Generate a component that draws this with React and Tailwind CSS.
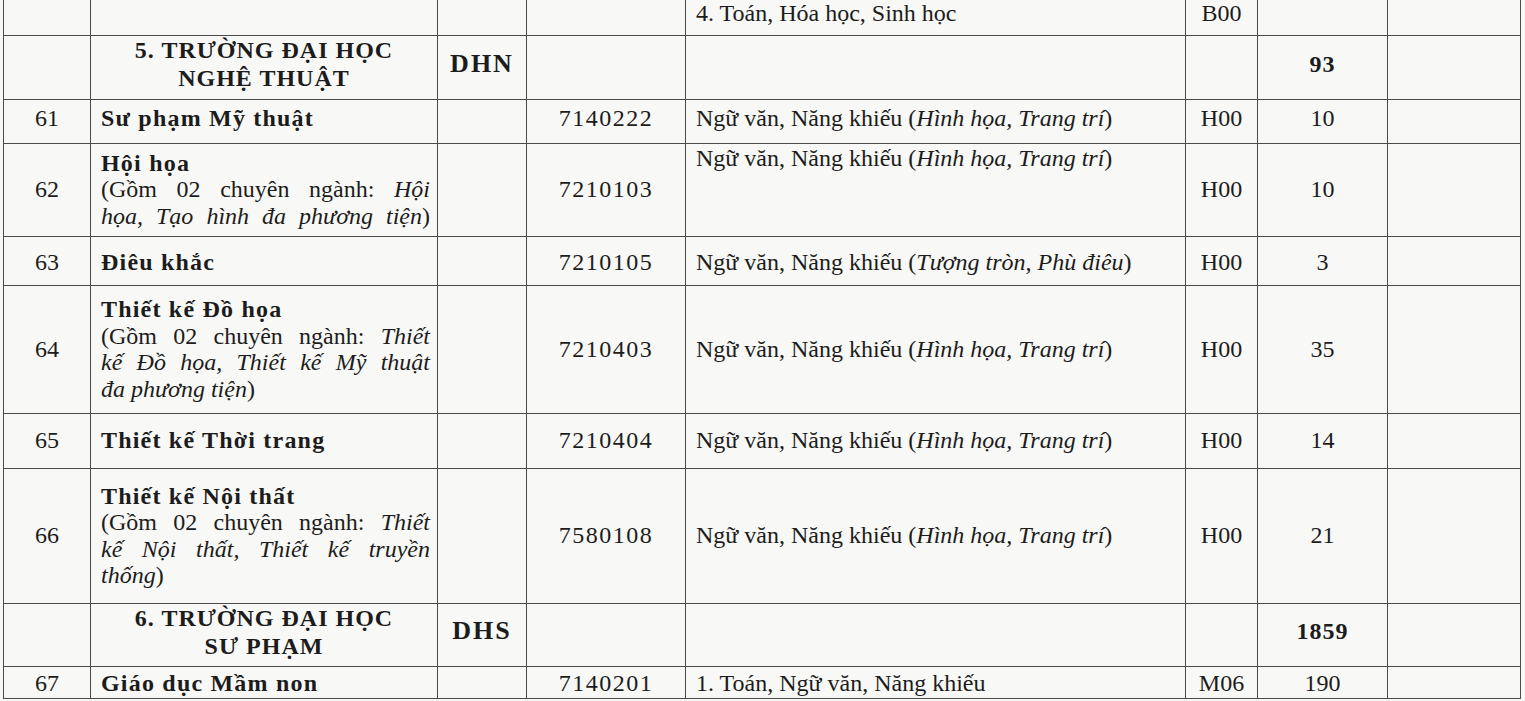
const cols = [87, 347, 89, 159, 500, 72, 130, 133];

const td = "border border-[#4a4a4a] p-0 align-middle";

function Num({ children, className = "" }) {
  return <td className={`${td} text-center ${className}`}>{children}</td>;
}

// each sub line is given explicitly so the breaks follow the scan
function Name({ title, lines = [] }) {
  return (
    <td className={`${td} pl-[10px] pr-[7px]`}>
      <div className="font-bold tracking-[1.2px] whitespace-nowrap">{title}</div>
      {lines.map((l, i) => (
        <div
          key={i}
          className={`whitespace-nowrap text-justify ${i < lines.length - 1 || l.full ? "[text-align-last:justify]" : ""}`}
        >
          {l.text}
        </div>
      ))}
    </td>
  );
}

function HinhHoa() {
  return (
    <>
      Ngữ văn, Năng khiếu (<i>Hình họa, Trang trí</i>)
    </>
  );
}

function Major({ no, h, title, lines, code, subject, block, quota, top }) {
  return (
    <tr style={{ height: h }}>
      <Num>{no}</Num>
      <Name title={title} lines={lines} />
      <td className={td}></td>
      <Num className="tracking-[1.5px]">{code}</Num>
      <td className={`${td} pl-[10px] ${top ? "align-top pt-[1px]" : ""}`}>{subject}</td>
      <Num>{block}</Num>
      <Num>{quota}</Num>
      <td className={td}></td>
    </tr>
  );
}

function School({ h, line1, line2, code, total }) {
  return (
    <tr style={{ height: h }}>
      <td className={td}></td>
      <td className={`${td} text-center font-bold tracking-[1px] leading-[28px] pb-[6px]`}>
        <div>{line1}</div>
        <div>{line2}</div>
      </td>
      <td className={`${td} text-center font-bold text-[26px] tracking-[2px] pb-[6px]`}>{code}</td>
      <td className={td}></td>
      <td className={td}></td>
      <td className={td}></td>
      <td className={`${td} text-center font-bold tracking-[1px] pb-[6px]`}>{total}</td>
      <td className={td}></td>
    </tr>
  );
}

export default function App() {
  return (
    <div className="w-[1525px] h-[701px] overflow-hidden bg-[#f8f8f6] text-[#1c1c1c] font-['Liberation_Serif','Times_New_Roman',serif] text-[24px] leading-[26.5px]">
      <table className="ml-[3px] table-fixed border-collapse" style={{ width: 1517 }}>
        <colgroup>
          {cols.map((w, i) => (
            <col key={i} style={{ width: w }} />
          ))}
        </colgroup>
        <tbody>
          <tr style={{ height: 31 }}>
            <td className={`${td} border-t-0`}></td>
            <td className={`${td} border-t-0`}></td>
            <td className={`${td} border-t-0`}></td>
            <td className={`${td} border-t-0`}></td>
            <td className={`${td} border-t-0 pl-[10px] pb-[8px]`}>4. Toán, Hóa học, Sinh học</td>
            <td className={`${td} border-t-0 text-center pb-[8px]`}>B00</td>
            <td className={`${td} border-t-0`}></td>
            <td className={`${td} border-t-0`}></td>
          </tr>
          <School h={64} line1="5. TRƯỜNG ĐẠI HỌC" line2="NGHỆ THUẬT" code="DHN" total="93" />
          <tr style={{ height: 44 }}>
            <Num className="pb-[6px]">61</Num>
            <td className={`${td} pl-[10px] pb-[6px] font-bold tracking-[1.2px]`}>Sư phạm Mỹ thuật</td>
            <td className={td}></td>
            <Num className="pb-[6px] tracking-[1.5px]">7140222</Num>
            <td className={`${td} pl-[10px] pb-[6px]`}>
              <HinhHoa />
            </td>
            <Num className="pb-[6px]">H00</Num>
            <Num className="pb-[6px]">10</Num>
            <td className={td}></td>
          </tr>
          <Major
            no="62"
            h={93}
            top
            title="Hội họa"
            lines={[
              { text: <>(Gồm 02 chuyên ngành: <i>Hội</i></> },
              { text: <><i>họa, Tạo hình đa phương tiện</i>)</>, full: true },
            ]}
            code="7210103"
            subject={<HinhHoa />}
            block="H00"
            quota="10"
          />
          <tr style={{ height: 49 }}>
            <Num className="pt-[4px]">63</Num>
            <td className={`${td} pl-[10px] pt-[4px] font-bold tracking-[1.2px]`}>Điêu khắc</td>
            <td className={td}></td>
            <Num className="pt-[4px] tracking-[1.5px]">7210105</Num>
            <td className={`${td} pl-[10px] pt-[4px]`}>
              Ngữ văn, Năng khiếu (<i>Tượng tròn, Phù điêu</i>)
            </td>
            <Num className="pt-[4px]">H00</Num>
            <Num className="pt-[4px]">3</Num>
            <td className={td}></td>
          </tr>
          <Major
            no="64"
            h={128}
            title="Thiết kế Đồ họa"
            lines={[
              { text: <>(Gồm 02 chuyên ngành: <i>Thiết</i></> },
              { text: <i>kế Đồ họa, Thiết kế Mỹ thuật</i> },
              { text: <><i>đa phương tiện</i>)</> },
            ]}
            code="7210403"
            subject={<HinhHoa />}
            block="H00"
            quota="35"
          />
          <Major
            no="65"
            h={55}
            title="Thiết kế Thời trang"
            code="7210404"
            subject={<HinhHoa />}
            block="H00"
            quota="14"
          />
          <Major
            no="66"
            h={135}
            title="Thiết kế Nội thất"
            lines={[
              { text: <>(Gồm 02 chuyên ngành: <i>Thiết</i></> },
              { text: <i>kế Nội thất, Thiết kế truyền</i> },
              { text: <><i>thống</i>)</> },
            ]}
            code="7580108"
            subject={<HinhHoa />}
            block="H00"
            quota="21"
          />
          <School h={63} line1="6. TRƯỜNG ĐẠI HỌC" line2="SƯ PHẠM" code="DHS" total="1859" />
          <tr style={{ height: 32 }}>
            <Num className="pt-[2px]">67</Num>
            <td className={`${td} pl-[10px] pt-[2px] font-bold tracking-[1.2px]`}>Giáo dục Mầm non</td>
            <td className={td}></td>
            <Num className="pt-[2px] tracking-[1.5px]">7140201</Num>
            <td className={`${td} pl-[10px] pt-[2px]`}>1. Toán, Ngữ văn, Năng khiếu</td>
            <Num className="pt-[2px]">M06</Num>
            <Num className="pt-[2px]">190</Num>
            <td className={td}></td>
          </tr>
        </tbody>
      </table>
    </div>
  );
}
